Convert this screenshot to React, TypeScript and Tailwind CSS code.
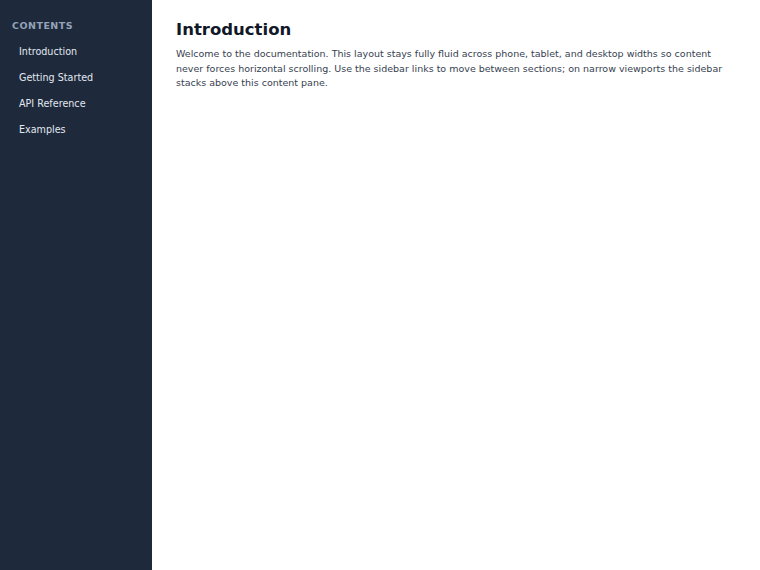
const sections = ["Introduction", "Getting Started", "API Reference", "Examples"];

export default function App() {
  return (
    <div className="flex min-h-[570px] font-['DejaVu_Sans',sans-serif]">
      {/* Sidebar */}
      <nav className="w-[152px] shrink-0 bg-[#1e293b] pl-3 pt-[19px]">
        <h2 className="text-[9.5px] font-bold uppercase leading-[14px] tracking-[0.05em] text-[#94a3b8]">
          Contents
        </h2>
        <ul className="mt-[6px] flex flex-col">
          {sections.map((s) => (
            <li key={s}>
              <a href="#" className="block py-[6px] pl-[7px] text-[9.6px] leading-[14px] text-[#e2e8f0]">
                {s}
              </a>
            </li>
          ))}
        </ul>
      </nav>

      {/* Content pane */}
      <main className="min-w-0 flex-1 px-6 pt-[18px]">
        <h1 className="text-[16.5px] font-bold leading-[24px] text-[#111827]">Introduction</h1>
        <p className="mt-[5px] text-[9.5px] leading-[14.5px] text-[#374151]">
          Welcome to the documentation. This layout stays fully fluid across phone, tablet, and desktop widths so content
          never forces horizontal scrolling. Use the sidebar links to move between sections; on narrow viewports the sidebar
          stacks above this content pane.
        </p>
      </main>
    </div>
  );
}
